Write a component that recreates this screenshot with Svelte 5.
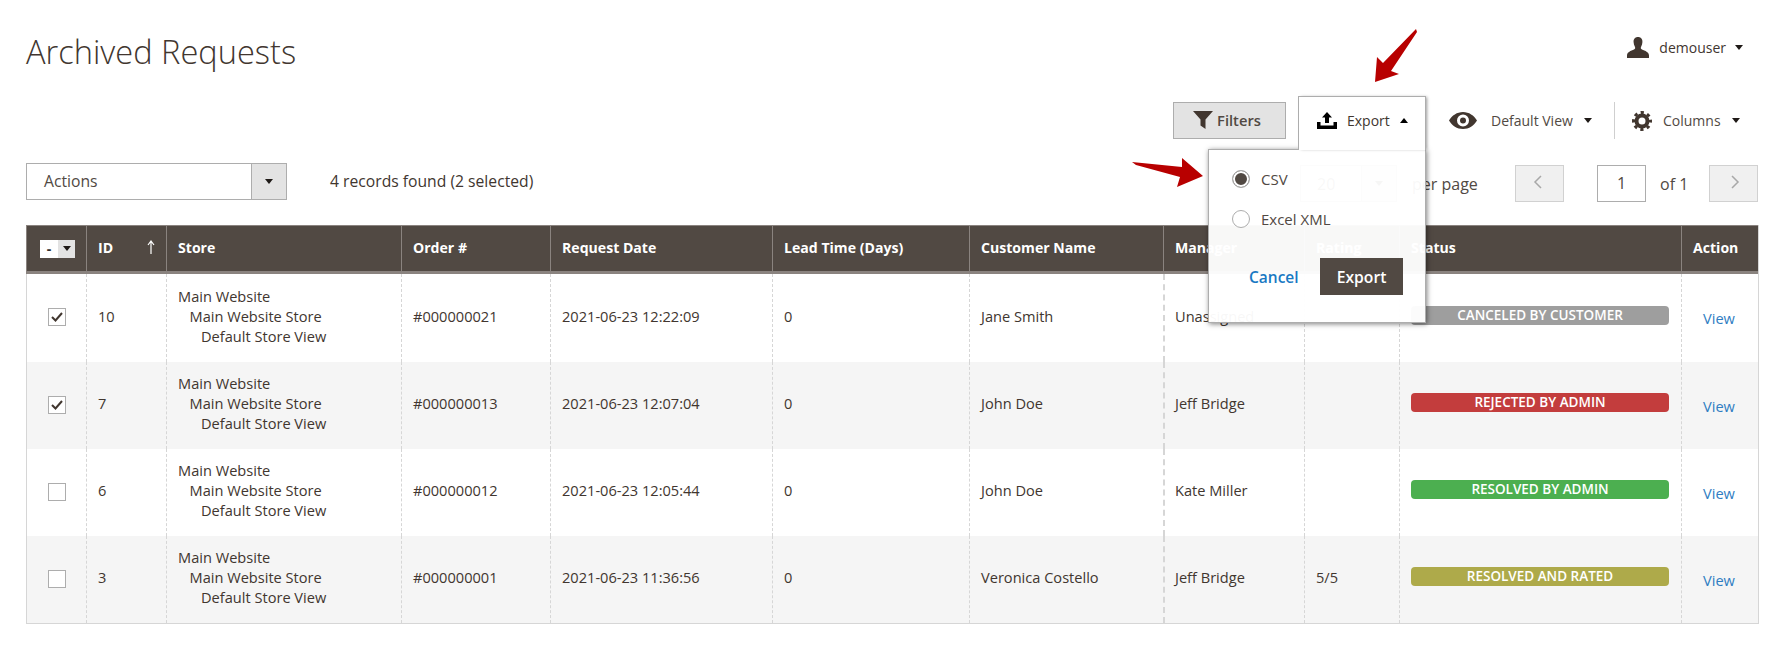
<script lang="ts">
    const columns = [
        { label: 'ID', width: 80 },
        { label: 'Store', width: 235 },
        { label: 'Order #', width: 149 },
        { label: 'Request Date', width: 222 },
        { label: 'Lead Time (Days)', width: 197 },
        { label: 'Customer Name', width: 194 },
        { label: 'Manager', width: 141 },
        { label: 'Rating', width: 95 },
        { label: 'Status', width: 282 },
        { label: 'Action', width: 77 }
    ];

    const rows = [
        { id: 10, checked: true, order: '#000000021', date: '2021-06-23 12:22:09', customer: 'Jane Smith', manager: 'Unassigned', rating: '', status: 'CANCELED BY CUSTOMER', tone: 'grey' },
        { id: 7, checked: true, order: '#000000013', date: '2021-06-23 12:07:04', customer: 'John Doe', manager: 'Jeff Bridge', rating: '', status: 'REJECTED BY ADMIN', tone: 'red' },
        { id: 6, checked: false, order: '#000000012', date: '2021-06-23 12:05:44', customer: 'John Doe', manager: 'Kate Miller', rating: '', status: 'RESOLVED BY ADMIN', tone: 'green' },
        { id: 3, checked: false, order: '#000000001', date: '2021-06-23 11:36:56', customer: 'Veronica Costello', manager: 'Jeff Bridge', rating: '5/5', status: 'RESOLVED AND RATED', tone: 'olive' }
    ];
</script>

<main class="page">
    <header class="page-header">
        <h1>Archived Requests</h1>
        <div class="user">
            <svg width="22" height="21" viewBox="0 0 22 21">
                <path fill="#41362f" d="M11 0c3 0 4.6 2.2 4.4 5.2-.1 1.6-.5 3-1.2 4.2-.5.9-.6 2 .1 2.7 1.3 1.2 7.7 2.3 7.7 6.4V21H0v-2.500c0-4.100 6.400-5.200 7.700-6.400.7-.7.6-1.800.1-2.700C7.100 8.200 6.700 6.800 6.600 5.200 6.400 2.200 8 0 11 0z" />
            </svg>
            <span>demouser</span>
            <i class="caret"></i>
        </div>
    </header>

    <div class="toolbar">
        <button class="filters">
            <svg width="20" height="18" viewBox="0 0 20 18">
                <path fill="#41362f" d="M0 0h20l-7.500 8.500V18l-5-3.500V8.500z" />
            </svg>
            Filters
        </button>
        <div class="export">
            <button class="export-tab">
                <svg width="20" height="17" viewBox="0 0 20 17">
                    <path fill="#000" d="M10 0l5 5.500h-3V11H8V5.500H5zM0 10h3.500v3.500h13V10H20v7H0z" />
                </svg>
                <span>Export</span>
                <i class="caret up"></i>
            </button>
            <div class="export-menu">
                <label class="radio on"><i></i>CSV</label>
                <label class="radio"><i></i>Excel XML</label>
                <div class="menu-actions">
                    <span class="cancel">Cancel</span>
                    <button class="primary">Export</button>
                </div>
            </div>
        </div>
        <div class="tool view">
            <svg width="28" height="17" viewBox="0 0 28 17">
                <path fill="#41362f" fill-rule="evenodd" d="M14 0c6 0 11 3.500 14 8.500C25 13.500 20 17 14 17S3 13.500 0 8.500C3 3.500 8 0 14 0zm0 2.500a6 6 0 1 0 0 12 6 6 0 0 0 0-12zm0 3a3 3 0 1 1 0 6 3 3 0 0 1 0-6z" />
            </svg>
            <span>Default View</span>
            <i class="caret"></i>
        </div>
        <div class="tool columns">
            <svg width="20" height="20" viewBox="0 0 20 20">
                <circle cx="10" cy="10" r="5.500" fill="none" stroke="#41362f" stroke-width="4" />
                <circle class="teeth" cx="10" cy="10" r="8.500" fill="none" stroke="#41362f" stroke-width="3" />
            </svg>
            <span>Columns</span>
            <i class="caret"></i>
        </div>
    </div>

    <div class="controls">
        <div class="actions">
            <span>Actions</span>
            <b><i class="caret"></i></b>
        </div>
        <p class="found">4 records found (2 selected)</p>
        <div class="pager">
            <div class="per-page"><span>20</span><b><i class="caret"></i></b></div>
            <span class="per-label">per page</span>
            <div class="nav prev">
                <svg width="9" height="14" viewBox="0 0 9 14"><path d="M8 1L2 7l6 6" /></svg>
            </div>
            <div class="current">1</div>
            <span class="of">of 1</span>
            <div class="nav next">
                <svg width="9" height="14" viewBox="0 0 9 14"><path d="M1 1l6 6-6 6" /></svg>
            </div>
        </div>
    </div>

    <table>
        <colgroup>
            <col style="width: 60px" />
            {#each columns as column}
                <col style="width: {column.width}px" />
            {/each}
        </colgroup>
        <thead>
            <tr>
                <th class="select-all">
                    <span class="mass"><em>-</em><b><i class="caret"></i></b></span>
                </th>
                {#each columns as column}
                    <th>
                        {column.label}
                        {#if column.label === 'ID'}
                            <svg class="sort" width="8" height="14" viewBox="0 0 8 14">
                                <path d="M4 14V1M1 5l3-4 3 4" />
                            </svg>
                        {/if}
                    </th>
                {/each}
            </tr>
        </thead>
        <tbody>
            {#each rows as row}
                <tr>
                    <td class="check">
                        <span class="box">
                            {#if row.checked}
                                <svg width="14" height="12" viewBox="0 0 14 12"><path d="M2 6l3.500 3.500L12 2" /></svg>
                            {/if}
                        </span>
                    </td>
                    <td>{row.id}</td>
                    <td class="store">
                        <div>Main Website</div>
                        <div class="indent-1">Main Website Store</div>
                        <div class="indent-2">Default Store View</div>
                    </td>
                    <td>{row.order}</td>
                    <td>{row.date}</td>
                    <td>0</td>
                    <td>{row.customer}</td>
                    <td class="manager">{row.manager}</td>
                    <td>{row.rating}</td>
                    <td class="status-cell"><div class="badge {row.tone}">{row.status}</div></td>
                    <td class="action"><span>View</span></td>
                </tr>
            {/each}
        </tbody>
    </table>

    <svg class="annotations" width="1790" height="655" viewBox="0 0 1790 655">
        <path fill="#b80000" d="M1416 29l1 3-26 39 8 3-24 8 2-25 6 6z" />
        <path fill="#b80000" d="M1132 162l50 5-0-9 21 18-26 11 3-10-44-12z" />
    </svg>
</main>

<style>
    :global(body) {
        margin: 0;
        background: #fff;
    }

    .page {
        position: relative;
        width: 1790px;
        height: 655px;
        overflow: hidden;
        box-sizing: border-box;
        padding: 0 31px 0 26px;
        font-family: "Open Sans", "Liberation Sans", sans-serif;
        font-size: 15px;
        color: #41362f;
    }

    .page-header {
        display: flex;
        justify-content: space-between;
        align-items: center;
        height: 96px;
    }

    h1 {
        margin: 7px 0 0;
        font-size: 32.600px;
        font-weight: 300;
    }

    .user {
        display: flex;
        align-items: center;
        gap: 10px;
        margin: 0 16px 2px 0;
        font-size: 14px;
    }

    .user .caret {
        margin-left: -1px;
    }

    .caret {
        display: inline-block;
        width: 0;
        height: 0;
        border-left: 4.5px solid transparent;
        border-right: 4.5px solid transparent;
        border-top: 5.5px solid #1f1a17;
    }

    .caret.up {
        border-top: 0;
        border-bottom: 5.5px solid #000;
    }

    .toolbar {
        display: flex;
        justify-content: flex-end;
        align-items: flex-start;
        height: 67px;
        font-size: 14px;
    }

    .filters {
        display: flex;
        align-items: center;
        gap: 4px;
        justify-content: center;
        box-sizing: border-box;
        width: 113px;
        height: 37px;
        margin: 6px 12px 0 0;
        padding: 0 5px 1px 0;
        background: #e3e3e3;
        border: 1px solid #adadad;
        font: 600 14.700px "Open Sans", sans-serif;
        color: #514943;
    }

    .export {
        position: relative;
        width: 128px;
        height: 53px;
    }

    .export-tab {
        position: relative;
        z-index: 3;
        box-sizing: border-box;
        display: flex;
        align-items: center;
        width: 128px;
        height: 54px;
        padding: 0 0 6px 18px;
        background: #fff;
        border: 1px solid #adadad;
        border-bottom: 0;
        box-shadow: 2px 0 3px -1px rgba(0, 0, 0, 0.4);
        font: 14px "Open Sans", sans-serif;
        color: #41362f;
    }

    .export-tab span {
        margin: 0 10px;
    }

    .export-menu {
        position: absolute;
        z-index: 2;
        top: 53px;
        right: 0;
        box-sizing: border-box;
        width: 218px;
        height: 174px;
        padding: 19px 22px 0 23px;
        background: rgba(255, 255, 255, 0.96);
        border: 1px solid #adadad;
        box-shadow: 1px 1px 5px rgba(0, 0, 0, 0.5);
    }

    .radio {
        display: flex;
        align-items: center;
        gap: 11px;
        height: 20px;
        margin-bottom: 20px;
        font-size: 15px;
        color: #514943;
    }

    .radio i {
        box-sizing: border-box;
        width: 18px;
        height: 18px;
        border: 1px solid #adadad;
        border-radius: 50%;
        background: #fff;
    }

    .radio.on i {
        border-color: #adadad;
        background: #514943;
        box-shadow: inset 0 0 0 2px #fff;
    }

    .menu-actions {
        display: flex;
        justify-content: space-between;
        align-items: center;
        margin: 29px 0 0 17px;
    }

    .cancel {
        color: #1979c3;
        font-size: 15.500px;
        font-weight: 600;
    }

    .primary {
        width: 83px;
        height: 37px;
        padding: 0;
        background: #514943;
        border: 0;
        color: #fff;
        font: 600 15.700px "Open Sans", sans-serif;
    }

    .tool {
        display: flex;
        flex: none;
        align-items: center;
        height: 37px;
        margin-top: 6px;
        color: #514943;
        white-space: nowrap;
    }

    .view {
        width: 189px;
        padding-left: 23px;
        box-sizing: border-box;
        gap: 14px;
        border-right: 1px solid #cfcfcf;
    }

    .view i {
        margin-left: -3px;
    }

    .columns {
        width: 144px;
        box-sizing: border-box;
        padding-left: 17px;
        gap: 11px;
    }

    .teeth {
        stroke-dasharray: 3.200 3.476;
        stroke-dashoffset: 1.600;
    }

    .controls {
        display: flex;
        align-items: flex-start;
        height: 62px;
    }

    .actions,
    .per-page {
        display: flex;
        box-sizing: border-box;
        height: 37px;
        border: 1px solid #adadad;
    }

    .actions {
        width: 261px;
        align-items: center;
        padding-left: 17px;
        font-size: 15.700px;
        color: #514943;
    }

    .actions span {
        flex: 1;
        margin-bottom: 2px;
    }

    .actions b,
    .per-page b {
        display: flex;
        align-items: center;
        justify-content: center;
        width: 34px;
        height: 100%;
        background: #e3e3e3;
        border-left: 1px solid #adadad;
    }

    .found {
        flex: 1;
        margin: 7px 0 0 43px;
        font-size: 15.700px;
    }

    .pager {
        display: flex;
        align-items: center;
        margin: 2px 1px 0 0;
        font-size: 16px;
        color: #514943;
    }

    .per-page {
        width: 97px;
        align-items: center;
        padding-left: 16px;
        margin-right: 15px;
        height: 37px;
    }

    .per-page span {
        flex: 1;
    }

    .per-label {
        width: 103px;
    }

    .nav {
        display: flex;
        align-items: center;
        justify-content: center;
        box-sizing: border-box;
        width: 49px;
        height: 37px;
        padding-bottom: 3px;
        background: #f0f0f0;
        border: 1px solid #d1d1d1;
    }

    .prev {
        padding-right: 4px;
    }

    .next {
        padding-left: 4px;
    }

    .nav path {
        fill: none;
        stroke: #a8a8a8;
        stroke-width: 1.500;
    }

    .current {
        box-sizing: border-box;
        width: 49px;
        height: 37px;
        margin-left: 33px;
        border: 1px solid #adadad;
        text-align: center;
        line-height: 35px;
    }

    .of {
        width: 63px;
        padding-left: 14px;
        box-sizing: border-box;
    }

    table {
        table-layout: fixed;
        width: 1733px;
        border-collapse: separate;
        border-spacing: 0;
        border-right: 1px solid #d6d6d6;
        border-bottom: 1px solid #d6d6d6;
    }

    th {
        position: relative;
        box-sizing: border-box;
        height: 49px;
        padding: 0 11px 3px;
        background: #514943;
        border-top: 1px solid #8a837f;
        border-left: 1px solid #8a837f;
        border-bottom: 3px solid #8a837f;
        color: #fff;
        font-size: 14.100px;
        font-weight: 700;
        text-align: left;
    }

    th:first-child {
        padding: 0;
    }

    .sort {
        position: absolute;
        right: 11px;
        top: 14px;
        fill: none;
        stroke: #fff;
        stroke-width: 1.200;
    }

    .mass {
        display: flex;
        width: 35px;
        height: 18px;
        margin-left: 13px;
        background: #fff;
    }

    .mass em {
        width: 18px;
        text-align: center;
        color: #303030;
        font-style: normal;
        line-height: 17px;
    }

    .mass b {
        display: flex;
        flex: 1;
        align-items: center;
        justify-content: center;
        background: #e3e3e3;
    }

    td {
        box-sizing: border-box;
        height: 87px;
        padding: 0 11px 5px;
        border-left: 1px dashed #d6d6d6;
        font-size: 14.600px;
        vertical-align: middle;
        white-space: nowrap;
    }

    tbody tr:first-child td {
        height: 88px;
    }

    td:first-child {
        border-left: 1px solid #d6d6d6;
    }

    tbody tr:nth-child(even) td {
        background: #f5f5f5;
    }

    td.manager {
        padding-left: 10px;
        border-left: 2px dashed #d6d6d6;
    }

    .store {
        line-height: 20px;
    }

    .indent-1 {
        padding-left: 11.500px;
    }

    .indent-2 {
        padding-left: 23px;
    }

    td.check {
        padding: 0 0 2px;
    }

    .box {
        display: flex;
        align-items: center;
        justify-content: center;
        box-sizing: border-box;
        width: 18px;
        height: 18px;
        margin-left: 21px;
        background: #fff;
        border: 1px solid #adadad;
    }

    .box path {
        fill: none;
        stroke: #41362f;
        stroke-width: 2;
    }

    .badge {
        height: 19px;
        border-radius: 4px;
        color: #fff;
        font-size: 13.500px;
        font-weight: 600;
        line-height: 18px;
        text-align: center;
    }

    td.status-cell {
        padding: 0 12px 6px 11px;
    }

    .grey {
        background: #9e9e9e;
    }

    .red {
        background: #c33d3d;
    }

    .green {
        background: #4caf50;
    }

    .olive {
        background: #aeaa4a;
    }

    td.action {
        padding: 0 0 0 21px;
        color: #2f7dc2;
    }

    .annotations {
        position: absolute;
        z-index: 5;
        top: 0;
        left: 0;
        pointer-events: none;
    }
</style>
